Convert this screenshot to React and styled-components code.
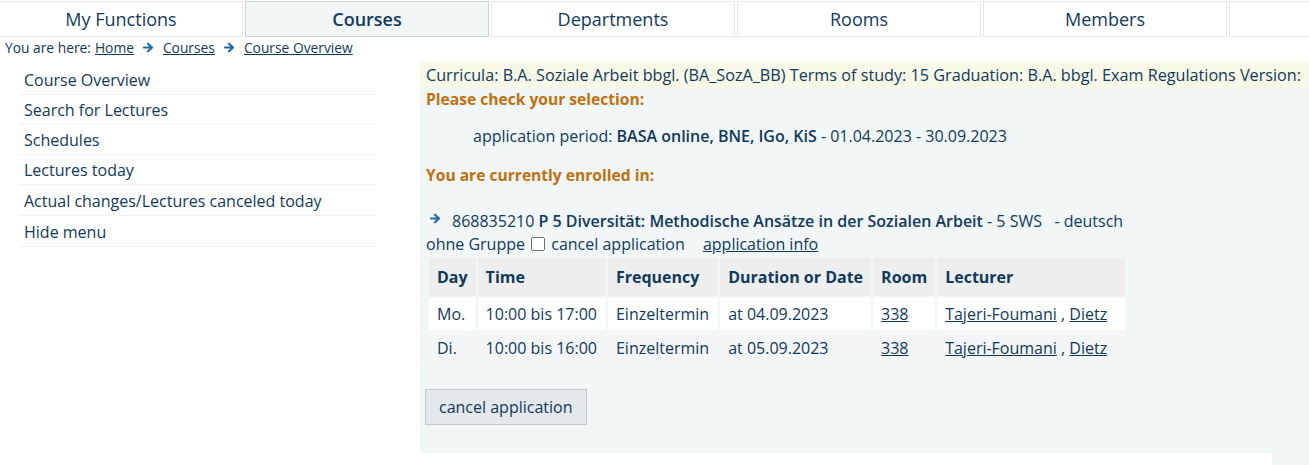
import React from 'react';
import styled, {createGlobalStyle} from 'styled-components';

const GlobalStyle = createGlobalStyle`
  html, body {
    margin: 0;
    padding: 0;
    background: #fff;
    font-family: "Open Sans", "Noto Sans", sans-serif;
    color: #0f3a5e;
    overflow: hidden;
  }
`;

const tabs = ['My Functions', 'Courses', 'Departments', 'Rooms', 'Members', ''];
const menu = [
  'Course Overview',
  'Search for Lectures',
  'Schedules',
  'Lectures today',
  'Actual changes/Lectures canceled today',
  'Hide menu',
];
const rows = [
  {day: 'Mo.', time: '10:00 bis 17:00', freq: 'Einzeltermin', date: 'at 04.09.2023', room: '338'},
  {day: 'Di.', time: '10:00 bis 16:00', freq: 'Einzeltermin', date: 'at 05.09.2023', room: '338'},
];

const Arrow = () => (
  <svg width="11" height="11" viewBox="0 0 11 11">
    <path d="M1 5.5h7.5M5 1.8l4 3.7-4 3.7" stroke="#1f6aa8" strokeWidth="2.2" fill="none" strokeLinecap="round" strokeLinejoin="round" />
  </svg>
);

const App = () => {
  return (
    <>
      <GlobalStyle />
      <TabBar>
        {tabs.map(t => (
          <Tab key={t || 'empty'} $active={t === 'Courses'}>
            {t}
          </Tab>
        ))}
      </TabBar>
      <Breadcrumb>
        <span>You are here:</span>
        <CrumbLink $first>Home</CrumbLink>
        <Arrow />
        <CrumbLink>Courses</CrumbLink>
        <Arrow />
        <CrumbLink>Course Overview</CrumbLink>
      </Breadcrumb>
      <Layout>
        <SideMenu>
          {menu.map(m => (
            <MenuItem key={m}>{m}</MenuItem>
          ))}
        </SideMenu>
        <Main>
          <Panel>
            <InfoBar>
              Curricula: B.A. Soziale Arbeit bbgl. (BA_SozA_BB) Terms of study: 15 Graduation: B.A. bbgl. Exam
              Regulations Version:
            </InfoBar>
            <Content>
              <Heading>Please check your selection:</Heading>
              <Period>
                application period: <b>BASA online, BNE, IGo, KiS</b> - 01.04.2023 - 30.09.2023
              </Period>
              <Heading $top={17}>You are currently enrolled in:</Heading>
              <CourseLine>
                <Arrow />
                <span>
                  868835210 <b>P 5 Diversität: Methodische Ansätze in der Sozialen Arbeit</b> - 5 SWS &nbsp; - deutsch
                </span>
              </CourseLine>
              <GroupLine>
                ohne Gruppe <Check /> cancel application <InfoLink>application info</InfoLink>
              </GroupLine>
              <Table>
                <thead>
                  <tr>
                    <Th>Day</Th>
                    <Th>Time</Th>
                    <Th>Frequency</Th>
                    <Th>Duration or Date</Th>
                    <Th>Room</Th>
                    <Th $wide>Lecturer</Th>
                  </tr>
                </thead>
                <tbody>
                  {rows.map((r, i) => (
                    <Tr key={r.day} $odd={i % 2 === 0}>
                      <Td>{r.day}</Td>
                      <Td>{r.time}</Td>
                      <Td>{r.freq}</Td>
                      <Td>{r.date}</Td>
                      <Td>
                        <CellLink>{r.room}</CellLink>
                      </Td>
                      <Td>
                        <CellLink>Tajeri-Foumani</CellLink> , <CellLink>Dietz</CellLink>
                      </Td>
                    </Tr>
                  ))}
                </tbody>
              </Table>
              <CancelButton>cancel application</CancelButton>
            </Content>
          </Panel>
          <Footer />
        </Main>
      </Layout>
    </>
  );
};

const TabBar = styled.div`
  display: flex;
  gap: 2px;
  padding-top: 1px;
  margin-left: -1px;
  width: 1310px;
  overflow: hidden;
`;

const Tab = styled.div`
  flex: 0 0 244px;
  box-sizing: border-box;
  height: 36px;
  display: flex;
  align-items: center;
  justify-content: center;
  font-size: 18px;
  color: #0f3a5e;
  font-weight: ${p => (p.$active ? 600 : 400)};
  background: ${p => (p.$active ? '#f1f6f7' : '#fff')};
  border: 1px solid ${p => (p.$active ? '#c9cfd2' : '#e4e9ec')};
`;

const Breadcrumb = styled.div`
  display: flex;
  align-items: center;
  gap: 9px;
  padding: 0 0 0 5px;
  height: 21px;
  font-size: 13.8px;
  white-space: pre;
`;

const CrumbLink = styled.a`
  color: #0f3a5e;
  text-decoration: underline;
  margin-left: ${p => (p.$first ? '-5px' : '0')};
`;

const Layout = styled.div`
  display: flex;
  align-items: flex-start;
  padding-top: 4px;
`;

const SideMenu = styled.ul`
  list-style: none;
  margin: 3px 0 0 20px;
  padding: 0;
  width: 356px;
  flex: 0 0 356px;
`;

const MenuItem = styled.li`
  font-size: 16px;
  line-height: 22px;
  padding: 4px 4px 3px;
  border-bottom: 1px dotted #e6eaec;
  &:nth-child(n + 5) {
    padding-top: 5px;
  }
  &:nth-child(n + 6) {
    padding-bottom: 3px;
  }
`;

const Main = styled.div`
  margin-left: 44px;
  flex: 1;
  display: flex;
  flex-direction: column;
  background: #f1f6f7;
`;

const Panel = styled.div`
  height: 391px;
`;

const InfoBar = styled.div`
  background: #f8f8e6;
  font-size: 16.2px;
  line-height: 26px;
  padding-left: 6px;
  white-space: nowrap;
  overflow: hidden;
`;

const Content = styled.div`
  padding: 0 6px;
`;

const Heading = styled.div`
  color: #c0700f;
  font-weight: 700;
  font-size: 15.6px;
  line-height: 22px;
  margin-top: ${p => p.$top || 0}px;
`;

const Period = styled.div`
  font-size: 16px;
  line-height: 22px;
  margin: 15px 0 0 47px;
  b {
    font-weight: 600;
  }
`;

const CourseLine = styled.div`
  display: flex;
  align-items: center;
  gap: 11px;
  padding-left: 4px;
  font-size: 16px;
  line-height: 22px;
  margin-top: 24px;
  white-space: pre;
  b {
    font-weight: 600;
  }
  svg {
    margin-top: -6px;
  }
`;

const GroupLine = styled.div`
  font-size: 16px;
  line-height: 22px;
  margin-top: 1px;
  display: flex;
  align-items: center;
  white-space: pre;
`;

const Check = styled.span`
  display: inline-block;
  width: 14px;
  height: 14px;
  box-sizing: border-box;
  border: 1.5px solid #6b6f73;
  border-radius: 2px;
  background: #fff;
  margin: 0 2px;
`;

const InfoLink = styled.a`
  margin-left: 14px;
  color: #0f3a5e;
  text-decoration: underline;
`;

const Table = styled.table`
  border-collapse: separate;
  border-spacing: 2px;
  margin: 1px 0 0 1px;
  font-size: 16px;
`;

const Th = styled.th`
  background: #eeeeee;
  text-align: left;
  font-weight: 700;
  padding: 8px 8px 8px 8px;
  line-height: 22px;
  min-width: ${p => (p.$wide ? '172px' : 'auto')};
`;

const Tr = styled.tr`
  background: ${p => (p.$odd ? '#ffffff' : '#f3f5f6')};
`;

const Td = styled.td`
  padding: 5px 9px 5px 8px;
  line-height: 22px;
  white-space: nowrap;
`;

const CellLink = styled.a`
  color: #0f3a5e;
  text-decoration: underline;
`;

const CancelButton = styled.button`
  margin-top: 23px;
  font-family: inherit;
  font-size: 16px;
  color: #0f3a5e;
  background: #e4e8eb;
  border: 1px solid #c6cacd;
  border-radius: 0;
  padding: 6px 13px 6px;
  margin-left: -1px;
`;

const Footer = styled.div`
  height: 14px;
  width: 854px;
  background: #fff;
  margin-left: -2px;
`;

export default App;
